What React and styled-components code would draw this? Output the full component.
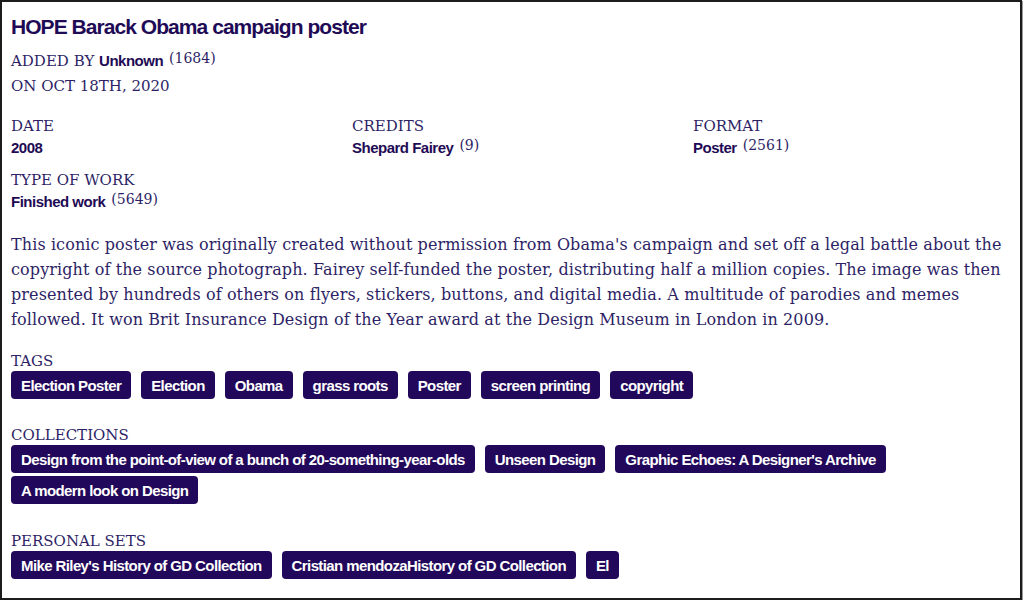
import styled, { createGlobalStyle } from 'styled-components';

const GlobalStyle = createGlobalStyle`
  html, body {
    margin: 0;
    padding: 0;
    background: #ffffff;
  }
`;

const ink = '#2e1f66';
const deep = '#1f0b55';
const serif = `"DejaVu Serif", "Liberation Serif", serif`;
const sans = `"Liberation Sans", Arial, sans-serif`;

const item = {
  title: 'HOPE Barack Obama campaign poster',
  addedBy: 'Unknown',
  addedCount: 1684,
  date: 'ON OCT 18TH, 2020',
  fields: [
    { label: 'DATE', value: '2008' },
    { label: 'CREDITS', value: 'Shepard Fairey', count: 9 },
    { label: 'FORMAT', value: 'Poster', count: 2561 },
    { label: 'TYPE OF WORK', value: 'Finished work', count: 5649 },
  ],
  description:
    "This iconic poster was originally created without permission from Obama's campaign and set off a legal battle about the copyright of the source photograph. Fairey self-funded the poster, distributing half a million copies. The image was then presented by hundreds of others on flyers, stickers, buttons, and digital media. A multitude of parodies and memes followed. It won Brit Insurance Design of the Year award at the Design Museum in London in 2009.",
  groups: [
    {
      label: 'TAGS',
      gap: 19,
      items: ['Election Poster', 'Election', 'Obama', 'grass roots', 'Poster', 'screen printing', 'copyright'],
    },
    {
      label: 'COLLECTIONS',
      gap: 26,
      items: [
        'Design from the point-of-view of a bunch of 20-something-year-olds',
        'Unseen Design',
        "Graphic Echoes: A Designer's Archive",
        'A modern look on Design',
      ],
    },
    {
      label: 'PERSONAL SETS',
      gap: 27,
      items: ["Mike Riley's History of GD Collection", 'Cristian mendozaHistory of GD Collection', 'El'],
    },
  ],
};

export default function App() {
  return (
    <>
      <GlobalStyle />
      <Frame>
        <Title>{item.title}</Title>
        <Meta>
          <MetaLine>
            ADDED BY <Strong>{item.addedBy}</Strong>
            <Count>({item.addedCount})</Count>
          </MetaLine>
          <MetaLine>{item.date}</MetaLine>
        </Meta>
        <Fields>
          {item.fields.map(field => (
            <Field key={field.label}>
              <Label>{field.label}</Label>
              <Value>
                <Strong>{field.value}</Strong>
                {field.count !== undefined && <Count>({field.count})</Count>}
              </Value>
            </Field>
          ))}
        </Fields>
        <Description>{item.description}</Description>
        {item.groups.map(group => (
          <Group key={group.label} $gap={group.gap}>
            <Label>{group.label}</Label>
            <Chips>
              {group.items.map(name => (
                <Chip key={name} href="#">
                  {name}
                </Chip>
              ))}
            </Chips>
          </Group>
        ))}
      </Frame>
    </>
  );
}

const Frame = styled.div`
  box-sizing: border-box;
  width: 1022px;
  height: 600px;
  border: 2px solid #1c1c1c;
  box-shadow: 1px 1px 0 #9a9a9a;
  padding: 12px 9px 0;
  color: ${ink};
  font-family: ${serif};
`;

const Title = styled.h1`
  margin: 0;
  font-family: ${sans};
  font-size: 21px;
  font-weight: 700;
  letter-spacing: -0.95px;
  line-height: 26px;
  color: ${deep};
`;

const Meta = styled.div`
  margin-top: 8px;
  display: flex;
  flex-direction: column;
`;

const MetaLine = styled.div`
  font-size: 15px;
  line-height: 25px;
`;

const Strong = styled.span`
  font-family: ${sans};
  font-weight: 700;
  font-size: 15px;
  letter-spacing: -0.5px;
  color: ${deep};
`;

const Count = styled.sup`
  font-size: 14px;
  margin-left: 6px;
  vertical-align: 3px;
  line-height: 0;
`;

const Fields = styled.div`
  margin-top: 17px;
  display: grid;
  grid-template-columns: repeat(3, 341px);
  row-gap: 10px;
`;

const Field = styled.div`
  display: flex;
  flex-direction: column;
`;

const Label = styled.div`
  font-size: 15px;
  line-height: 20px;
`;

const Value = styled.div`
  line-height: 24px;
`;

const Description = styled.p`
  margin: 18px 0 0;
  font-size: 16px;
  line-height: 25px;
  letter-spacing: 0.1px;
  padding-right: 4px;
`;

const Group = styled.section`
  margin-top: ${p => p.$gap}px;
`;

const Chips = styled.div`
  display: flex;
  flex-wrap: wrap;
  gap: 3px 10px;
`;

const Chip = styled.a`
  display: inline-flex;
  align-items: center;
  height: 28px;
  padding: 0 10px;
  border-radius: 4px;
  background: #22085a;
  color: #ffffff;
  font-family: ${sans};
  font-size: 15px;
  font-weight: 700;
  letter-spacing: -0.6px;
  text-decoration: none;
`;
